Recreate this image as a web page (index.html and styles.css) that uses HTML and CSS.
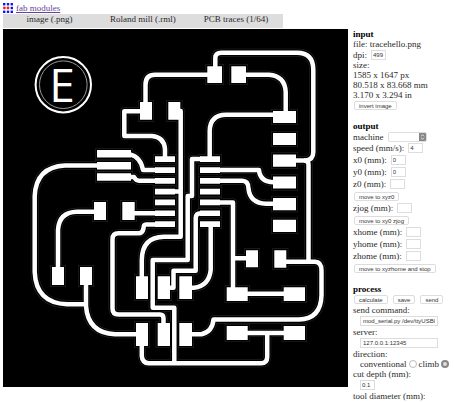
FILE: index.html
```html
<!DOCTYPE html>
<html lang="en">
<head>
<meta charset="utf-8">
<title>fab modules</title>
<link rel="stylesheet" href="styles.css">
</head>
<body>
<header class="brand">
  <svg class="logo" viewBox="0 0 10 10" aria-hidden="true">
    <g fill="#1414f0">
      <rect x="0" y="0" width="2.400" height="2.400"/><rect x="3.800" y="0" width="2.400" height="2.400"/><rect x="7.600" y="0" width="2.400" height="2.400"/>
      <rect x="7.600" y="3.800" width="2.400" height="2.400"/>
      <rect x="0" y="7.600" width="2.400" height="2.400"/><rect x="3.800" y="7.600" width="2.400" height="2.400"/><rect x="7.600" y="7.600" width="2.400" height="2.400"/>
    </g>
    <g fill="#f02020"><circle cx="1.400" cy="5" r="1.400"/><circle cx="5" cy="5" r="1.400"/></g>
  </svg>
  <a href="#">fab modules</a>
</header>
<nav class="steps">
  <span>image (.png)</span>
  <span>Roland mill (.rml)</span>
  <span>PCB traces (1/64)</span>
</nav>
<main class="workspace">
  <svg class="board" viewBox="3 29 345 358" role="img" aria-label="PCB traces">
    <defs>
      <g id="traces">
        <path d="M215.3 68V58q0-5.3 6-5.3H297q16.3 0 16.3 17V152q0 8-8 8.5H295"/>
        <path d="M304 160.500q4.500 0 4.500 4V261.700M285 261.700H315q6.500 0 6.500 9V295Q321 319 299 319.500H213.500q-1 12-12 14.800H190"/>
        <path d="M208 74.700H155q-9.500 0-9.500 10V104"/>
        <path d="M141 111.300H124.300V136H152Q164 137 165 149V158"/>
        <path d="M178 111h2.700V236.700H164Q142 237 141.800 260V278M174 191.500h6"/>
        <path d="M274 114.700H226Q210 115 209.700 131V158"/>
        <path d="M245 74.700H269Q285 76 285.700 92V112"/>
        <path d="M98 165.500H65Q36 167 34.700 196V272Q36 303 67 304.300H86"/>
        <path d="M86 284V306Q88 333 115 334.300H137"/>
        <path d="M95 211.700H77Q59 212 58 230V268"/>
        <path d="M130 154.300q11 3 13 15.700H156M130 177h4q2 3.700 5 3.700H156M133 213.300H156"/>
        <path d="M156 224.500H146q-2.500 0-2.500 4-1 4.800-5 4.800H118.500q-6 0-6 6V308.500q0 6 6 6H160q3.500 0 3.500 4V324"/>
        <path d="M201 159H192V196H187.700V260H152.700V307.700H174.300V363"/>
        <path d="M141.800 345V356q.500 7 7 7.300H261q6.200 0 6.200-6.500V333M246 333h39M246 293.700h39"/>
        <path d="M201 213.300q-5.300 0-5.300 5V270.700H173.500V287.700H169"/>
        <path d="M210.700 226V270Q209 286 194 287.700H191"/>
        <path d="M219 170H259Q260 182 274 182.300M219 180.700H242q6.500 0 6.500 8Q250 203 266 203.700H274"/>
        <path d="M219 202.500H233V288M233 258.300H247"/>
      </g>
      <path id="pads" d="M207.300 66.300h14.700v16.700h-14.700zM231.300 66.300h14.700v16.700h-14.700zM140 102h12v17.700h-12zM168.300 102h12v17.700h-12z
        M273 111h23v12h-23zM273 133h23v12h-23zM273 154.500h23v12.200h-23zM273 176.400h23v12.200h-23zM273 198h23v12.200h-23zM273 219.800h23v12.200h-23z
        M246 250.300h12v17h-12zM274.300 250.300h12v17.500h-12z
        M97 150h34v7.600h-34zM97 162h34v7.400h-34zM97 173.300h34v7.400h-34z
        M94 202h12v18h-12zM122.300 202h12.400v18h-12.400zM52 267h12v18h-12zM80 267h12v18h-12z
        M136 276.300h12v22.700h-12zM157.700 276.300h12.300v22.700h-12.300zM179.300 276.300h12.700v22.700h-12.700z
        M136 323h12v23h-12zM157.700 323h12.300v23h-12.300zM179.300 323h12.700v23h-12.700z
        M226.700 287.300h21v13.700h-21zM283.700 287.300h21.300v13.700h-21.300zM226.700 326h21v14h-21zM283.700 326h21.300v14h-21.300z
        M155 156.300h20v5.700h-20zM155 167.200h20v5.700h-20zM155 178h20v5.700h-20zM155 188.700h20v5.700h-20zM155 199.600h20v5.700h-20zM155 210.400h20v5.700h-20zM155 221.300h20v5.700h-20z
        M200 156.300h20v5.700h-20zM200 167.200h20v5.700h-20zM200 178h20v5.700h-20zM200 188.700h20v5.700h-20zM200 199.600h20v5.700h-20zM200 210.400h20v5.700h-20zM200 221.300h20v5.700h-20z"/>
    </defs>
    <rect x="3" y="29" width="345" height="358"/>
    <use href="#traces" class="trace-edge"/><use href="#pads" class="pad-edge"/>
    <use href="#traces" class="trace-gap"/><use href="#pads" class="pad-gap"/>
    <use href="#traces" class="trace" stroke-width="4.5"/><use href="#pads" class="pad"/>
    <circle class="ring-outer" cx="63.300" cy="84.700" r="27.700"/>
    <circle class="ring-inner" cx="63.300" cy="84.700" r="23.800"/>
    <text class="mark" x="62" y="101.700">E</text>
  </svg>
  <form class="panel">
    <section>
      <h2>input</h2>
      <div class="line">file: tracehello.png</div>
      <div class="line control"><label for="dpi">dpi:</label><input class="num" id="dpi" value="499"></div>
      <div class="line">size:</div>
      <div class="line">1585 x 1647 px</div>
      <div class="line">80.518 x 83.668 mm</div>
      <div class="line">3.170 x 3.294 in</div>
      <div class="line control actions"><button type="button">invert image</button></div>
    </section>
    <section>
      <h2>output</h2>
      <div class="line control"><label for="machine">machine</label>
        <span class="picker"><select id="machine"><option></option></select><svg viewBox="0 0 8 10" aria-hidden="true"><path d="M2.200 4 4 2.200 5.800 4M2.200 6 4 7.800 5.800 6"/></svg></span></div>
      <div class="line field"><label for="speed">speed (mm/s):</label><input class="num" id="speed" value="4"></div>
      <div class="line field"><label for="x0">x0 (mm):</label><input class="num" id="x0" value="0"></div>
      <div class="line field"><label for="y0">y0 (mm):</label><input class="num" id="y0" value="0"></div>
      <div class="line field"><label for="z0">z0 (mm):</label><input class="num" id="z0"></div>
      <div class="line field actions"><button type="button">move to xyz0</button></div>
      <div class="line field"><label for="zjog">zjog (mm):</label><input class="num" id="zjog"></div>
      <div class="line field actions"><button type="button">move to xy0 zjog</button></div>
      <div class="line field"><label for="xhome">xhome (mm):</label><input class="num" id="xhome"></div>
      <div class="line field"><label for="yhome">yhome (mm):</label><input class="num" id="yhome"></div>
      <div class="line field"><label for="zhome">zhome (mm):</label><input class="num" id="zhome"></div>
      <div class="line field actions"><button type="button">move to xyzhome and stop</button></div>
    </section>
    <section>
      <h2>process</h2>
      <div class="line control actions"><button type="button">calculate</button><button type="button">save</button><button type="button">send</button></div>
      <div class="line"><label for="command">send command:</label></div>
      <div class="line field indent"><input class="wide" id="command" value="mod_serial.py /dev/ttyUSB0"></div>
      <div class="line"><label for="server">server:</label></div>
      <div class="line field indent"><input class="wide" id="server" value="127.0.0.1:12345"></div>
      <div class="line">direction:</div>
      <div class="line indent choices">
        <label for="conventional">conventional</label><input type="radio" name="direction" id="conventional">
        <label for="climb">climb</label><input type="radio" name="direction" id="climb" checked>
      </div>
      <div class="line"><label for="depth">cut depth (mm):</label></div>
      <div class="line field indent"><input class="num" id="depth" value="0.1"></div>
      <div class="line">tool diameter (mm):</div>
    </section>
  </form>
</main>
</body>
</html>
```
FILE: styles.css
```css
* { box-sizing: border-box; }

body {
  margin: 0;
  padding: 1px 0 0 3px;
  background: #fff;
  color: #2a2a2a;
  font: 9px/10px "Liberation Serif", serif;
}

.brand {
  display: flex;
  align-items: center;
  gap: 3px;
  height: 13px;
}

.brand a { color: #63459a; }

.logo {
  width: 10px;
  height: 10px;
}

.steps {
  display: grid;
  grid-template-columns: repeat(3, 1fr);
  width: 62%;
  height: 14px;
  background: #ddd;
  text-align: center;
}

.workspace {
  display: grid;
  grid-template-columns: minmax(0, 1fr) 101px;
  align-items: start;
  gap: 5px;
  padding-top: 1px;
}

.board {
  display: block;
  width: 100%;
}

#traces { stroke-linejoin: round; }

.trace, .trace-edge, .trace-gap { fill: none; }
.trace { stroke: #fff; }
.trace-edge { stroke: #2a2a2a; stroke-width: 8px; }
.trace-gap { stroke: #000; stroke-width: 7px; }
.pad { fill: #fff; }
.pad-edge { stroke: #2a2a2a; stroke-width: 4px; }
.pad-gap { stroke: #000; stroke-width: 3px; }

.ring-outer { fill: none; stroke: #fff; stroke-width: 2px; }
.ring-inner { fill: none; stroke: #999; stroke-width: 1px; }

.mark {
  fill: #fff;
  font: 46px "Open Sans", sans-serif;
  text-anchor: middle;
}

.panel section + section { margin-top: 10px; }

h2 {
  margin: 0;
  color: #000;
  font-size: 9px;
  line-height: 10px;
}

.line {
  display: flex;
  align-items: center;
  gap: 4px;
  height: 10px;
  white-space: nowrap;
}

.control { height: 11px; }
.field { height: 12px; }
.indent { padding-left: 7px; }

.actions {
  gap: 5px;
  padding-left: 1px;
}

input, button, select {
  margin: 0;
  color: #333;
  font: 6px/8px "Liberation Sans", sans-serif;
}

button {
  height: 9px;
  padding: 0 4px;
  border: 1px solid #ddd;
  border-radius: 2px;
  background: #fff;
}

.num, .wide {
  height: 10px;
  padding: 0 2px;
  border: 1px solid #ddd;
  background: #fff;
}

.num { width: 15px; padding: 0 1px; }
.wide { width: 78px; }

.picker {
  display: flex;
  width: 39px;
  height: 10px;
  border: 1px solid #ddd;
  border-radius: 2px;
  overflow: hidden;
}

.picker select {
  flex: 1;
  min-width: 0;
  border: 0;
  padding: 0;
  background: #fff;
  appearance: none;
}

.picker svg {
  width: 7px;
  background: #888;
}

.picker path {
  fill: none;
  stroke: #fff;
  stroke-width: 1px;
}

.choices { gap: 2px; }

.choices input {
  width: 8px;
  height: 8px;
  border: 1px solid #bbb;
  border-radius: 50%;
  background: #fff;
  appearance: none;
}

.choices input:checked {
  border: 2px solid #888;
  background: #ddd;
}
```
